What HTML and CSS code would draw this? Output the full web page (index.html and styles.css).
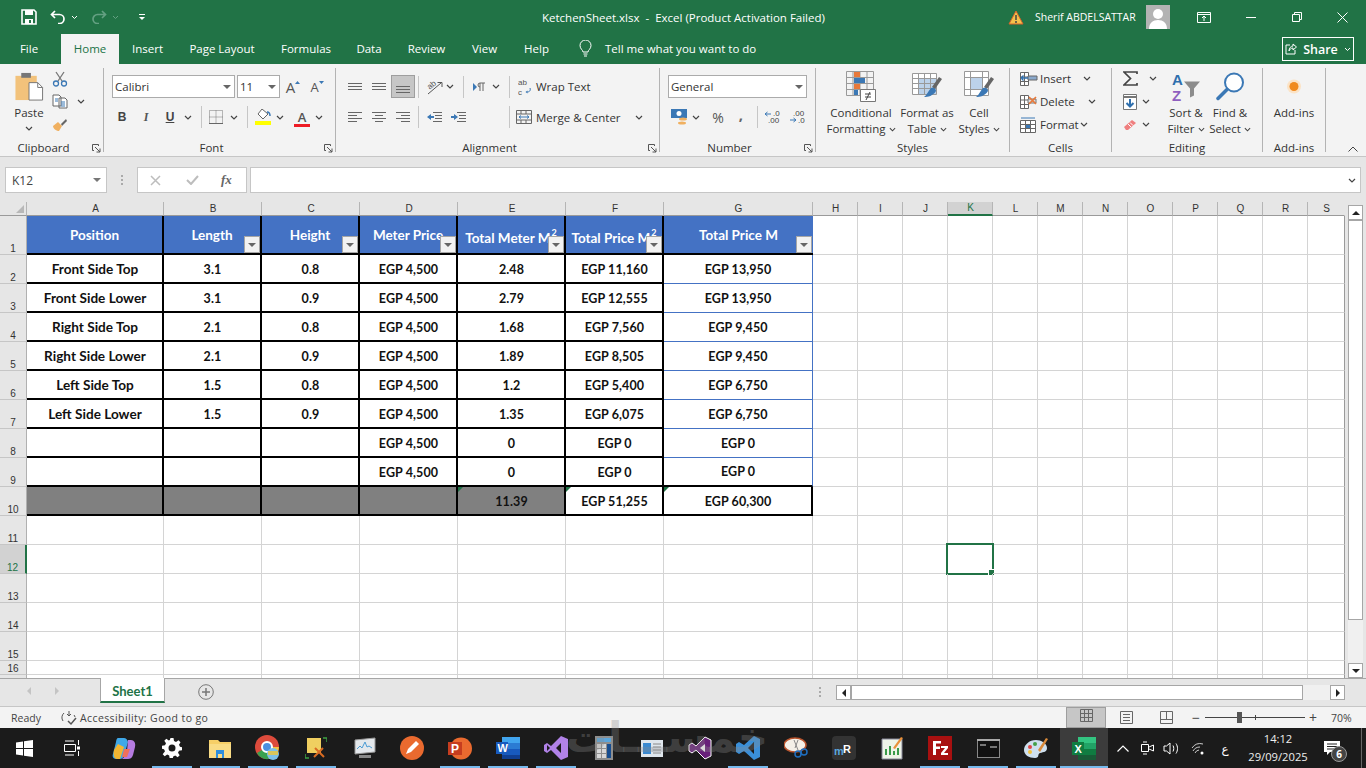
FILE: index.html
```html
<!DOCTYPE html>
<html lang="en">
<head>
<meta charset="utf-8">
<title>KetchenSheet.xlsx - Excel</title>
<link rel="stylesheet" href="styles.css">
</head>
<body>
<svg class="defs" width="0" height="0" aria-hidden="true">
  <defs>
    <symbol id="chev" viewBox="0 0 8 5"><path d="M1 1l3 3 3-3" fill="none" stroke="#444" stroke-width="1.2"/></symbol>
    <symbol id="launch" viewBox="0 0 9 9"><path d="M.5.5h6v1.5M.5.5v6H2M3 3l5 5M8 4.5V8H4.5" fill="none" stroke="#555"/></symbol>
    <symbol id="lines-l" viewBox="0 0 16 12"><path d="M1 1.5h14M1 4.5h9M1 7.5h14M1 10.5h9" stroke="#666"/></symbol>
    <symbol id="lines-c" viewBox="0 0 16 12"><path d="M1 1.5h14M4 4.5h8M1 7.5h14M4 10.5h8" stroke="#666"/></symbol>
    <symbol id="lines-r" viewBox="0 0 16 12"><path d="M1 1.5h14M6 4.5h9M1 7.5h14M6 10.5h9" stroke="#666"/></symbol>
    <symbol id="filter" viewBox="0 0 16 17"><rect x=".5" y=".5" width="15" height="16" fill="#f2f2f2" stroke="#a6a6a6"/><path d="M4 7h8l-4 4z" fill="#666"/></symbol>
  </defs>
</svg>

<header class="titlebar">
  <div class="qat">
    <svg class="save" width="16" height="16" viewBox="0 0 16 16"><path d="M1 1h12l2 2v12H1z" fill="none" stroke="#fff" stroke-width="1.6"/><path d="M4 1h8v5H4zM4 10h8v5H4z" fill="#fff"/><path d="M8 11h2v3H8z" fill="#217346"/></svg>
    <svg class="undo" width="16" height="14" viewBox="0 0 16 14"><path d="M5 1L1.500 4.500 5 8M2 4.500h7.500a4.500 4.500 0 0 1 0 9H8" fill="none" stroke="#fff" stroke-width="1.7"/></svg>
    <svg class="qchev" width="7" height="5"><path d="M1 1l2.500 2.500L6 1" fill="none" stroke="#fff"/></svg>
    <svg class="redo" width="16" height="14" viewBox="0 0 16 14"><path d="M11 1l3.500 3.500L11 8M14 4.500H6.500a4.500 4.500 0 0 0 0 9H8" fill="none" stroke="#64a082" stroke-width="1.7"/></svg>
    <svg class="qchev" width="7" height="5"><path d="M1 1l2.500 2.500L6 1" fill="none" stroke="#64a082"/></svg>
    <svg class="custom" width="8" height="8" viewBox="0 0 8 8"><path d="M1 1.500h6" stroke="#fff"/><path d="M1 4h6L4 7z" fill="#fff"/></svg>
  </div>
  <div class="doc-title">KetchenSheet.xlsx&nbsp; -&nbsp; Excel (Product Activation Failed)</div>
  <div class="account">
    <svg width="16" height="15" viewBox="0 0 16 15"><path d="M8 1l7 13H1z" fill="#f3c14b" stroke="#d9622b"/><path d="M8 5v5M8 11v2" stroke="#444" stroke-width="1.500"/></svg>
    <span class="user">Sherif ABDELSATTAR</span>
    <svg class="avatar" width="24" height="24" viewBox="0 0 24 24"><rect width="24" height="24" fill="#b3b3b3"/><circle cx="12" cy="9" r="5" fill="#fff"/><path d="M3 24c0-6 4-9 9-9s9 3 9 9z" fill="#fff"/></svg>
  </div>
  <div class="winbtns">
    <svg width="14" height="11" viewBox="0 0 14 11"><path d="M.5.500h13v10H.500zM.500 2.500h13M7 9V4M5 6l2-2 2 2" fill="none" stroke="#fff"/></svg>
    <svg class="minb" width="10" height="1" viewBox="0 0 10 1"><path d="M0 .5h10" stroke="#fff"/></svg>
    <svg class="maxb" width="10" height="10" viewBox="0 0 10 10"><path d="M.5 2.500h7v7h-7zM2.500 2.500v-2h7v7h-2" fill="none" stroke="#fff"/></svg>
    <svg class="closeb" width="11" height="11" viewBox="0 0 11 11"><path d="M.5.500l10 10M10.500.500l-10 10" stroke="#fff"/></svg>
  </div>
</header>

<nav class="tabs">
  <div class="tab">File</div>
  <div class="tab active">Home</div>
  <div class="tab">Insert</div>
  <div class="tab">Page Layout</div>
  <div class="tab">Formulas</div>
  <div class="tab">Data</div>
  <div class="tab">Review</div>
  <div class="tab">View</div>
  <div class="tab">Help</div>
  <div class="tell">
    <svg width="13" height="17" viewBox="0 0 13 17"><path d="M4 12c0-2-3-3-3-6.500a5.500 5.500 0 0 1 11 0C12 9 9 10 9 12zM4.500 14h4M5 16h3" fill="none" stroke="#fff"/></svg>
    <span>Tell me what you want to do</span>
  </div>
  <div class="share">
    <svg width="12" height="12" viewBox="0 0 12 12"><path d="M5 2H1v9h9V7M4 8c0-3 2-5 4-5V1l3.500 3L8 7V5C6 5 5 6 4 8z" fill="none" stroke="#fff"/></svg>
    <span>Share</span>
    <svg width="7" height="5"><path d="M1 1l2.500 2.500L6 1" fill="none" stroke="#fff"/></svg>
  </div>
</nav>

<section class="ribbon">
  <div class="group g-clip">
    <div class="gbody clip-body">
      <div class="big w34">
        <svg class="bigicon" width="30" height="32" viewBox="0 0 30 32"><path d="M1 5h22v25H1z" fill="#f2c27b"/><path d="M7 2h10v5H7z" fill="#777"/><path d="M15 12h9l5 5v13H15z" fill="#fff" stroke="#777"/><path d="M24 12v5h5" fill="none" stroke="#777"/></svg>
        <span class="bigtxt">Paste</span>
        <svg class="c8 mt" width="8" height="5"><use href="#chev"/></svg>
      </div>
      <div class="clip-col">
        <div class="row23"><svg width="16" height="16" viewBox="0 0 16 16"><path d="M4 1l6 9M12 1L6 10" stroke="#777" stroke-width="1.300"/><circle cx="4" cy="12.500" r="2.500" fill="none" stroke="#3b78b5" stroke-width="1.300"/><circle cx="12" cy="12.500" r="2.500" fill="none" stroke="#3b78b5" stroke-width="1.300"/></svg></div>
        <div class="row23"><svg width="16" height="15" viewBox="0 0 16 15"><path d="M1 1h6l2 2v9H1zM7 4h6l2 2v8H7z" fill="#fff" stroke="#666"/><path d="M3 5h3M3 7h3M9 8h4M9 10h4M9 12h4" stroke="#3b78b5"/></svg><svg class="c8 chevcopy" width="8" height="5"><use href="#chev"/></svg></div>
        <div class="row23"><svg width="16" height="15" viewBox="0 0 16 15"><path d="M9 7l5-5 1 2-5 5z" fill="#666"/><path d="M6 5l4 4-3 5c-2 0-6-2-6-5z" fill="#f0b060"/></svg></div>
      </div>
    </div>
    <div class="glabel"><span>Clipboard</span><svg class="launch" width="9" height="9"><use href="#launch"/></svg></div>
  </div>

  <div class="group g-font">
    <div class="gbody col">
      <div class="frow">
        <div class="combo font-name"><span>Calibri</span><i class="tri"></i></div>
        <div class="combo font-size"><span>11</span><i class="tri"></i></div>
        <div class="b w24 ml1 glyphA">A<svg class="caret" width="5" height="3"><path d="M0 3l2.500-3L5 3z" fill="#3b78b5"/></svg></div>
        <div class="b w24 glyphA small">A<svg class="caret" width="5" height="3"><path d="M0 0l2.500 3L5 0z" fill="#3b78b5"/></svg></div>
      </div>
      <div class="frow r2">
        <div class="b w24 bold-b">B</div>
        <div class="b w24 ital">I</div>
        <div class="b w24 und">U</div>
        <div class="b w12"><svg width="8" height="5"><use href="#chev"/></svg></div>
        <i class="sep ml7 mr3"></i>
        <div class="b w22"><svg width="14" height="14" viewBox="0 0 14 14"><path d="M.5.500h13v13H.500zM7 .5v13M.5 7h13" fill="none" stroke="#777" stroke-dasharray="1 1"/><path d="M0 13.500h14" stroke="#666"/></svg></div>
        <div class="b w14"><svg width="8" height="5"><use href="#chev"/></svg></div>
        <i class="sep ml6 mr3"></i>
        <div class="b w24"><svg width="17" height="16" viewBox="0 0 17 16"><path d="M7 0l6 5-5 5-5-5z" fill="#fff" stroke="#666"/><path d="M12 3c2 0 3 2 3 4" fill="none" stroke="#3b78b5" stroke-width="1.500"/><path d="M0 12h16v4H0z" fill="#ff0"/></svg></div>
        <div class="b w10"><svg width="8" height="5"><use href="#chev"/></svg></div>
        <div class="b w24 ml5 colorA">A</div>
        <div class="b w10"><svg width="8" height="5"><use href="#chev"/></svg></div>
      </div>
    </div>
    <div class="glabel"><span>Font</span><svg class="launch" width="9" height="9"><use href="#launch"/></svg></div>
  </div>

  <div class="group g-align">
    <div class="gbody col">
      <div class="frow">
        <div class="b w24"><svg width="14" height="7" viewBox="0 0 14 7"><path d="M0 .5h14M0 3.500h14M0 6.500h14" stroke="#666"/></svg></div>
        <div class="b w24"><svg width="14" height="7" viewBox="0 0 14 7"><path d="M0 .5h14M0 3.500h14M0 6.500h14" stroke="#666"/></svg></div>
        <div class="b w24 on"><svg width="14" height="7" viewBox="0 0 14 7"><path d="M0 .5h14M0 3.500h14M0 6.500h14" stroke="#666"/></svg></div>
        <i class="sep ml3"></i>
        <div class="b w22 ml4"><svg width="20" height="19" viewBox="0 0 20 19"><text x="3" y="11" transform="rotate(-40 7 8)" class="ic-txt">ab</text><path d="M4 17L17 6M13.500 5.500H18V10" fill="none" stroke="#555"/></svg></div>
        <div class="b w10"><svg width="8" height="5"><use href="#chev"/></svg></div>
        <i class="sep ml8"></i>
        <div class="b w22 ml4"><svg width="13" height="10" viewBox="0 0 13 10"><path d="M0 1l4 4-4 4z" fill="#3b78b5"/><path d="M7 9V1h5M10 9V1M7 1a2 2 0 0 0 0 4" fill="none" stroke="#666"/></svg></div>
        <div class="b w12"><svg width="8" height="5"><use href="#chev"/></svg></div>
        <i class="sep ml7"></i>
        <div class="b w18 ml6"><svg width="14" height="19" viewBox="0 0 14 19"><text x="0" y="8" class="ic-txt">ab</text><text x="0" y="18" class="ic-txt">c</text><path d="M12 11c1 3-1 4-3 4" fill="none" stroke="#3b78b5"/><path d="M9.500 13.500v3L7.500 15z" fill="#3b78b5"/></svg></div>
        <span class="t ml2">Wrap Text</span>
      </div>
      <div class="frow r2 r2a">
        <div class="b w24"><svg width="16" height="12"><use href="#lines-l"/></svg></div>
        <div class="b w24"><svg width="16" height="12"><use href="#lines-c"/></svg></div>
        <div class="b w24"><svg width="16" height="12"><use href="#lines-r"/></svg></div>
        <i class="sep ml3"></i>
        <div class="b w22 ml4"><svg width="16" height="12" viewBox="0 0 16 12"><path d="M7 1.500h9M9 4.500h7M9 7.500h7M7 10.500h9" stroke="#666"/><path d="M1 6l4-3v2h3v2H5v2z" fill="#3b78b5"/></svg></div>
        <div class="b w22 ml2"><svg width="16" height="12" viewBox="0 0 16 12"><path d="M7 1.500h9M9 4.500h7M9 7.500h7M7 10.500h9" stroke="#666"/><path d="M8 6L4 3v2H1v2h3v2z" fill="#3b78b5"/></svg></div>
        <i class="sep ml40"></i>
        <div class="b w18 ml5"><svg width="16" height="14" viewBox="0 0 16 14"><path d="M.5.500h15v13H.500zM.500 4h15M.5 10h15M5 .500V4M10 .500V4M5 10v3.500M10 10v3.500" fill="none" stroke="#666"/><path d="M3 7h10M3 7l2-1.500M3 7l2 1.500M13 7l-2-1.500M13 7l-2 1.500" stroke="#3b78b5" fill="none"/></svg></div>
        <span class="t ml3 mergetxt">Merge &amp; Center</span>
        <div class="b w12"><svg width="8" height="5"><use href="#chev"/></svg></div>
      </div>
    </div>
    <div class="glabel"><span>Alignment</span><svg class="launch" width="9" height="9"><use href="#launch"/></svg></div>
  </div>

  <div class="group g-num">
    <div class="gbody col">
      <div class="frow"><div class="combo num-fmt"><span>General</span><i class="tri"></i></div></div>
      <div class="frow r2 r2a">
        <div class="b w22"><svg width="17" height="16" viewBox="0 0 17 16"><path d="M0 0h16v9H0z" fill="#3b78b5"/><circle cx="8" cy="4.500" r="2.500" fill="#fff"/><ellipse cx="12" cy="10" rx="4" ry="1.500" fill="#f0b060"/><ellipse cx="11" cy="14" rx="4" ry="1.500" fill="#f0b060"/></svg></div>
        <div class="b w12"><svg width="8" height="5"><use href="#chev"/></svg></div>
        <div class="b w24 ml4 pct">%</div>
        <div class="b w22 comma">,</div>
        <i class="sep ml5"></i>
        <div class="b w26 ml1"><svg width="16" height="14" viewBox="0 0 16 14"><path d="M1 4h6M1 4l2.500-2M1 4l2.500 2" stroke="#3b78b5" fill="none"/><text x="9" y="6" class="dec">.0</text><text x="4" y="13" class="dec">.00</text></svg></div>
        <div class="b w24"><svg width="16" height="14" viewBox="0 0 16 14"><text x="4" y="6" class="dec">.00</text><path d="M1 10h6M7 10l-2.500-2M7 10l-2.500 2" stroke="#3b78b5" fill="none"/><text x="9" y="13" class="dec">.0</text></svg></div>
      </div>
    </div>
    <div class="glabel"><span>Number</span><svg class="launch" width="9" height="9"><use href="#launch"/></svg></div>
  </div>

  <div class="group g-styles">
    <div class="gbody styles-body">
      <div class="big w70">
        <svg class="bigicon" width="30" height="31" viewBox="0 0 30 31"><path d="M.5.500h27v24H.500zM7 .5v24M14 .5v24M21 .5v24M.5 6.500h27M.5 12.500h27M.5 18.500h27" fill="none" stroke="#999"/><path d="M8 1h6v5H8z" fill="#e8793a"/><path d="M8 7h11v5H8z" fill="#3b78b5"/><path d="M8 13h6v5H8z" fill="#e8793a"/><path d="M8 19h4v5H8z" fill="#3b78b5"/><path d="M14.500 18.500h15v12h-15z" fill="#fff" stroke="#777"/><path d="M19 23h6M19 26h6M24 21l-4 8" stroke="#444" fill="none"/></svg>
        <span class="bigtxt">Conditional</span>
        <span class="bigtxt">Formatting <svg width="7" height="5"><use href="#chev"/></svg></span>
      </div>
      <div class="big w54 ml4">
        <svg class="bigicon" width="30" height="31" viewBox="0 0 30 31"><path d="M.5 2.500h24v21H.500z" fill="#fff" stroke="#999"/><path d="M6 8h18v15H6z" fill="#bcd2ea"/><path d="M.5 7.500h24M.5 12.500h24M.5 17.500h24M6.500 2.500v21M12.500 2.500v21M18.500 2.500v21" fill="none" stroke="#999"/><path d="M27 6l3 2-7 10-3-2z" fill="#666"/><path d="M19 17c3-1 5 1 5 3-3 5-8 6-12 6 3-2 4-6 7-9z" fill="#3b78b5"/></svg>
        <span class="bigtxt">Format as</span>
        <span class="bigtxt">Table <svg width="7" height="5"><use href="#chev"/></svg></span>
      </div>
      <div class="big w48 ml1">
        <svg class="bigicon" width="30" height="31" viewBox="0 0 30 31"><path d="M.5.500h24v24H.500z" fill="#fff" stroke="#999"/><path d="M6 6h13v13H6z" fill="#bcd2ea"/><path d="M.5 6.500h24M.5 18.500h24M6.500.5v24M18.500.5v24" fill="none" stroke="#999"/><path d="M27 6l3 2-7 10-3-2z" fill="#666"/><path d="M19 17c3-1 5 1 5 3-3 5-8 6-12 6 3-2 4-6 7-9z" fill="#3b78b5"/></svg>
        <span class="bigtxt">Cell</span>
        <span class="bigtxt">Styles <svg width="7" height="5"><use href="#chev"/></svg></span>
      </div>
    </div>
    <div class="glabel center"><span>Styles</span></div>
  </div>

  <div class="group g-cells">
    <div class="gbody cells-body">
      <div class="row23">
        <svg width="18" height="16" viewBox="0 0 18 16"><path d="M.5 1.500h8v13h-8zM.5 6h8M.5 10.500h8M4.500 1.500v13" fill="#fff" stroke="#666"/><path d="M8 5h9v4H8z" fill="#8aa9cc" stroke="#666"/><path d="M8 7H1M1 7l2.500-2.500M1 7l2.500 2.500" fill="none" stroke="#2f6fad" stroke-width="1.300"/></svg>
        <span class="t ml2 tw41">Insert</span><svg width="8" height="5" class="cchev"><use href="#chev"/></svg>
      </div>
      <div class="row23">
        <svg width="18" height="16" viewBox="0 0 18 16"><path d="M.5 1.500h8v13h-8zM.5 6h8M.5 10.500h8M4.500 1.500v13" fill="#fff" stroke="#666"/><path d="M8 5h8v4H8z" fill="#ddd" stroke="#777"/><path d="M9 3l7 7M16 3l-7 7" stroke="#e8793a" stroke-width="1.700"/></svg>
        <span class="t ml2 tw46">Delete</span><svg width="8" height="5" class="cchev"><use href="#chev"/></svg>
      </div>
      <div class="row23">
        <svg width="18" height="16" viewBox="0 0 18 16"><path d="M.5 3.500h15v12H.500zM.5 7.500h15M.5 11.500h15M5.500 3.500v12M10.500 3.500v12" fill="#fff" stroke="#666"/><path d="M6 8h4v3H6z" fill="#3b78b5"/><path d="M1 1h14" stroke="#3b78b5"/></svg>
        <span class="t ml2 tw38">Format</span><svg width="8" height="5" class="cchev"><use href="#chev"/></svg>
      </div>
    </div>
    <div class="glabel center"><span>Cells</span></div>
  </div>

  <div class="group g-edit">
    <div class="gbody edit-body">
      <div class="edit-col">
        <div class="row23"><div class="b w20 sigma"><svg width="15" height="15" viewBox="0 0 15 15"><path d="M14 3V1H1l6.500 6.500L1 14h13v-2" fill="none" stroke="#444" stroke-width="1.700"/></svg></div><div class="b w12 ml7"><svg width="8" height="5"><use href="#chev"/></svg></div></div>
        <div class="row23"><div class="b w20"><svg width="14" height="16" viewBox="0 0 14 16"><path d="M.5.500h13v15H.500z" fill="#fff" stroke="#777"/><path d="M.5 3h13" stroke="#777" stroke-width="2"/><path d="M7 5v7M3.500 9L7 12.500 10.500 9" fill="none" stroke="#2f6fad" stroke-width="2"/></svg></div><div class="b w12"><svg width="8" height="5"><use href="#chev"/></svg></div></div>
        <div class="row23"><div class="b w20"><svg width="14" height="12" viewBox="0 0 14 12"><path d="M1 8l8-7 4 3-8 7H3z" fill="#ef7e7e"/><path d="M5 5l3 3M7 3.500l3 3" stroke="#fff"/></svg></div><div class="b w12"><svg width="8" height="5"><use href="#chev"/></svg></div></div>
      </div>
      <div class="big w44">
        <svg class="bigicon" width="30" height="30" viewBox="0 0 30 30"><text x="1" y="13" class="az a">A</text><text x="1" y="29" class="az z">Z</text><path d="M13 10h16l-6 7v7l-4 2v-9z" fill="#8c8c8c"/></svg>
        <span class="bigtxt">Sort &amp;</span>
        <span class="bigtxt">Filter <svg width="7" height="5"><use href="#chev"/></svg></span>
      </div>
      <div class="big w44">
        <svg class="bigicon" width="29" height="30" viewBox="0 0 29 30"><circle cx="18" cy="11" r="9" fill="#fff" stroke="#3b78b5" stroke-width="2"/><path d="M11 18L2 27" stroke="#3b78b5" stroke-width="3.500" stroke-linecap="round"/></svg>
        <span class="bigtxt">Find &amp;</span>
        <span class="bigtxt">Select <svg width="7" height="5"><use href="#chev"/></svg></span>
      </div>
    </div>
    <div class="glabel center"><span>Editing</span></div>
  </div>

  <div class="group g-add">
    <div class="gbody">
      <div class="big w62">
        <svg class="bigicon" width="30" height="30" viewBox="0 0 30 30"><circle cx="15" cy="15" r="7" fill="#fbe3c6"/><circle cx="15" cy="15" r="4.500" fill="#f08a1e"/></svg>
        <span class="bigtxt">Add-ins</span>
      </div>
    </div>
    <div class="glabel center"><span>Add-ins</span></div>
  </div>

  <svg class="collapse" width="10" height="6" viewBox="0 0 10 6"><path d="M.5 5.500L5 1l4.500 4.500" fill="none" stroke="#444"/></svg>
</section>

<section class="formula">
  <div class="namebox"><span>K12</span><i class="tri"></i></div>
  <div class="fdots"></div>
  <div class="fbtns">
    <svg width="11" height="11" viewBox="0 0 11 11"><path d="M1 1l9 9M10 1l-9 9" stroke="#bdbdbd" stroke-width="1.500"/></svg>
    <svg width="13" height="10" viewBox="0 0 13 10"><path d="M1 5l4 4 7-8" fill="none" stroke="#bdbdbd" stroke-width="2"/></svg>
    <span class="fx">fx</span>
  </div>
  <div class="finput"><svg width="8" height="5"><use href="#chev"/></svg></div>
</section>

<main class="sheet">
  <table class="grid">
    <colgroup>
      <col class="c-h"><col class="c-a"><col class="c-b"><col class="c-b"><col class="c-b"><col class="c-e"><col class="c-b"><col class="c-g">
      <col class="c-n"><col class="c-n"><col class="c-n"><col class="c-n"><col class="c-n"><col class="c-n"><col class="c-n"><col class="c-n"><col class="c-n"><col class="c-n"><col class="c-n"><col class="c-s">
    </colgroup>
    <tr class="rh">
      <th class="corner"></th><th>A</th><th>B</th><th>C</th><th>D</th><th>E</th><th>F</th><th>G</th><th>H</th><th>I</th><th>J</th><th class="sel">K</th><th>L</th><th>M</th><th>N</th><th>O</th><th>P</th><th>Q</th><th>R</th><th>S</th>
    </tr>
    <tr class="r1">
      <th>1</th>
      <td class="hd"><span>Position</span></td>
      <td class="hd"><span>Length</span><svg class="fb" width="16" height="17"><use href="#filter"/></svg></td>
      <td class="hd"><span>Height</span><svg class="fb" width="16" height="17"><use href="#filter"/></svg></td>
      <td class="hd"><span>Meter Price</span><svg class="fb" width="16" height="17"><use href="#filter"/></svg></td>
      <td class="hd low"><span>Total Meter M<sup>2</sup></span><svg class="fb" width="16" height="17"><use href="#filter"/></svg></td>
      <td class="hd low"><span>Total Price M<sup>2</sup></span><svg class="fb" width="16" height="17"><use href="#filter"/></svg></td>
      <td class="hd"><span>Total Price M</span><svg class="fb" width="16" height="17"><use href="#filter"/></svg></td>
      <td></td><td></td><td></td><td></td><td></td><td></td><td></td><td></td><td></td><td></td><td></td><td></td>
    </tr>
    <tr><th>2</th><td class="d">Front Side Top</td><td class="d">3.1</td><td class="d">0.8</td><td class="d">EGP 4,500</td><td class="d">2.48</td><td class="d">EGP 11,160</td><td class="d blue">EGP 13,950</td><td></td><td></td><td></td><td></td><td></td><td></td><td></td><td></td><td></td><td></td><td></td><td></td></tr>
    <tr><th>3</th><td class="d">Front Side Lower</td><td class="d">3.1</td><td class="d">0.9</td><td class="d">EGP 4,500</td><td class="d">2.79</td><td class="d">EGP 12,555</td><td class="d blue">EGP 13,950</td><td></td><td></td><td></td><td></td><td></td><td></td><td></td><td></td><td></td><td></td><td></td><td></td></tr>
    <tr><th>4</th><td class="d">Right Side Top</td><td class="d">2.1</td><td class="d">0.8</td><td class="d">EGP 4,500</td><td class="d">1.68</td><td class="d">EGP 7,560</td><td class="d blue">EGP 9,450</td><td></td><td></td><td></td><td></td><td></td><td></td><td></td><td></td><td></td><td></td><td></td><td></td></tr>
    <tr><th>5</th><td class="d">Right Side Lower</td><td class="d">2.1</td><td class="d">0.9</td><td class="d">EGP 4,500</td><td class="d">1.89</td><td class="d">EGP 8,505</td><td class="d blue">EGP 9,450</td><td></td><td></td><td></td><td></td><td></td><td></td><td></td><td></td><td></td><td></td><td></td><td></td></tr>
    <tr><th>6</th><td class="d">Left Side Top</td><td class="d">1.5</td><td class="d">0.8</td><td class="d">EGP 4,500</td><td class="d">1.2</td><td class="d">EGP 5,400</td><td class="d blue">EGP 6,750</td><td></td><td></td><td></td><td></td><td></td><td></td><td></td><td></td><td></td><td></td><td></td><td></td></tr>
    <tr><th>7</th><td class="d">Left Side Lower</td><td class="d">1.5</td><td class="d">0.9</td><td class="d">EGP 4,500</td><td class="d">1.35</td><td class="d">EGP 6,075</td><td class="d blue">EGP 6,750</td><td></td><td></td><td></td><td></td><td></td><td></td><td></td><td></td><td></td><td></td><td></td><td></td></tr>
    <tr><th>8</th><td class="d"></td><td class="d"></td><td class="d"></td><td class="d">EGP 4,500</td><td class="d">0</td><td class="d">EGP 0</td><td class="d blue">EGP 0</td><td></td><td></td><td></td><td></td><td></td><td></td><td></td><td></td><td></td><td></td><td></td><td></td></tr>
    <tr><th>9</th><td class="d"></td><td class="d"></td><td class="d"></td><td class="d">EGP 4,500</td><td class="d">0</td><td class="d">EGP 0</td><td class="d blue last9">EGP 0</td><td></td><td></td><td></td><td></td><td></td><td></td><td></td><td></td><td></td><td></td><td></td><td></td></tr>
    <tr><th>10</th><td class="d grey"></td><td class="d grey"></td><td class="d grey"></td><td class="d grey"></td><td class="d grey note">11.39</td><td class="d note">EGP 51,255</td><td class="d note">EGP 60,300</td><td></td><td></td><td></td><td></td><td></td><td></td><td></td><td></td><td></td><td></td><td></td><td></td></tr>
    <tr><th>11</th><td></td><td></td><td></td><td></td><td></td><td></td><td></td><td></td><td></td><td></td><td></td><td></td><td></td><td></td><td></td><td></td><td></td><td></td><td></td></tr>
    <tr><th class="sel-row">12</th><td></td><td></td><td></td><td></td><td></td><td></td><td></td><td></td><td></td><td></td><td class="cur"><i class="cursor"></i></td><td></td><td></td><td></td><td></td><td></td><td></td><td></td><td></td></tr>
    <tr><th>13</th><td></td><td></td><td></td><td></td><td></td><td></td><td></td><td></td><td></td><td></td><td></td><td></td><td></td><td></td><td></td><td></td><td></td><td></td><td></td></tr>
    <tr><th>14</th><td></td><td></td><td></td><td></td><td></td><td></td><td></td><td></td><td></td><td></td><td></td><td></td><td></td><td></td><td></td><td></td><td></td><td></td><td></td></tr>
    <tr><th>15</th><td></td><td></td><td></td><td></td><td></td><td></td><td></td><td></td><td></td><td></td><td></td><td></td><td></td><td></td><td></td><td></td><td></td><td></td><td></td></tr>
    <tr class="r16"><th>16</th><td></td><td></td><td></td><td></td><td></td><td></td><td></td><td></td><td></td><td></td><td></td><td></td><td></td><td></td><td></td><td></td><td></td><td></td><td></td></tr>
    <tr class="r17"><th></th><td></td><td></td><td></td><td></td><td></td><td></td><td></td><td></td><td></td><td></td><td></td><td></td><td></td><td></td><td></td><td></td><td></td><td></td><td></td></tr>
  </table>
  <div class="vscroll">
    <div class="sbtn"><i class="up"></i></div>
    <div class="vthumb"></div>
    <div class="sbtn"><i class="down"></i></div>
  </div>
</main>

<section class="sheetbar">
  <div class="navs"><i class="nl"></i><i class="nr"></i></div>
  <div class="sheettab">Sheet1</div>
  <svg class="plus" width="16" height="16" viewBox="0 0 16 16"><circle cx="8" cy="8" r="7.300" fill="none" stroke="#777"/><path d="M4 8h8M8 4v8" stroke="#777" stroke-width="1.500"/></svg>
  <div class="hdots"></div>
  <div class="hscroll">
    <div class="sbtn"><i class="left"></i></div>
    <div class="hthumb"></div>
    <div class="sbtn"><i class="right"></i></div>
  </div>
</section>

<footer class="status">
  <span class="ready">Ready</span>
  <svg class="acc" width="16" height="16" viewBox="0 0 16 16"><path d="M3 3a6 6 0 0 0-1 8M8 1v5M6 4l2 2 2-2M13 5a6 6 0 0 1 1 2" fill="none" stroke="#555"/><path d="M7 11l3 3 5-6" fill="none" stroke="#555" stroke-width="1.500"/></svg>
  <span class="acctxt">Accessibility: Good to go</span>
  <div class="views">
    <div class="view on"><svg width="13" height="13" viewBox="0 0 13 13"><path d="M.5.500h12v12H.500zM4.500.5v12M8.500.5v12M.5 4.500h12M.5 8.500h12" fill="none" stroke="#666"/></svg></div>
    <div class="view"><svg width="13" height="13" viewBox="0 0 13 13"><path d="M.5.500h12v12H.500zM3 3.500h7M3 6.500h7M3 9.500h7" fill="none" stroke="#666"/></svg></div>
    <div class="view"><svg width="13" height="13" viewBox="0 0 13 13"><path d="M.5.500h12v12H.500zM.5 8.500h12M6.500.5v8" fill="none" stroke="#666"/></svg></div>
  </div>
  <span class="zm zm-minus">&minus;</span>
  <div class="slider"><i class="thumb"></i><i class="tick"></i></div>
  <span class="zm zm-plus">+</span>
  <span class="pctz">70%</span>
</footer>

<div class="taskbar">
  <div class="slot"><svg width="17" height="17" viewBox="0 0 17 17"><path d="M0 2.400L7 1.400v6.600H0zM8 1.300L17 0v8H8zM0 9h7v6.600l-7-1zM8 9h9v8l-9-1.300z" fill="#fff"/></svg></div>
  <div class="slot"><svg width="17" height="16" viewBox="0 0 17 16"><path d="M1 1h9M1 15h9M.5 4.500h11v7H.5zM14.500 0v5M14.500 11v5" fill="none" stroke="#fff"/><path d="M13 6.500h3v3h-3z" fill="#fff"/></svg></div>
  <div class="apps">
    <div class="slot"><svg width="24" height="24" viewBox="0 0 24 24"><path d="M6 2h6c2 0 3 1 4 4l-4 14c-1 2-2 3-4 3H4c-3 0-4-3-3-5l3-12c.5-3 1-4 2-4z" fill="#3fa8e8"/><path d="M2 14l4-6 6 3-4 12H5c-3 0-4-4-3-9z" fill="#f2b632"/><path d="M16 4h3c3 0 5 3 4 7l-2 8c-1 3-3 4-5 4h-6c3-2 4-5 5-8z" fill="#b57be0"/><path d="M12 13h6l-3 8h-5z" fill="#f0705a"/></svg></div>
    <div class="slot u"><svg width="20" height="20" viewBox="0 0 20 20"><path d="M8.500 0h3l.5 3 2 1 2.500-1.700 2 2L17 6.800l1 2 2 .5v3l-3 .5-1 2 1.700 2.500-2 2-2.500-1.700-2 1-.5 2h-3l-.5-3-2-1-2.500 1.700-2-2L3 13.200l-1-2-2-.5v-3l3-.5 1-2L2.300 2.800l2-2L6.800 2.500l1-.5zM10 6.500a3.500 3.500 0 1 0 0 7 3.500 3.500 0 0 0 0-7z" fill="#fff" fill-rule="evenodd"/></svg></div>
    <div class="slot u"><svg width="22" height="19" viewBox="0 0 22 19"><path d="M0 1h9l2 2h11v16H0z" fill="#f6cf67"/><path d="M0 5h22v14H0z" fill="#f9dc85"/><path d="M7 11h8v8h-2v-4H9v4H7z" fill="#2f8fdc"/></svg></div>
    <div class="slot u"><svg width="26" height="26" viewBox="0 0 26 26"><circle cx="12" cy="12" r="12" fill="#dd4b3c"/><path d="M12 12L2 18A12 12 0 0 0 14 24z" fill="#38a14f"/><path d="M12 12h12a12 12 0 0 1-10 12z" fill="#f6c33f"/><circle cx="12" cy="12" r="5" fill="#4b8fe0" stroke="#fff" stroke-width="2"/><circle cx="18" cy="19" r="6" fill="#7cc0e8"/><path d="M13 16h10v4H13z" fill="#d8c65a"/></svg></div>
    <div class="slot u"><svg width="22" height="22" viewBox="0 0 22 22"><path d="M2 1h14v15H2z" fill="#f0cf60"/><path d="M0 21v-4M0 21h4M18 1h4v4" fill="none" stroke="#3ca043" stroke-width="1.500"/><path d="M9 20l9-9M10 11l9 9" stroke="#d96b22" stroke-width="2"/></svg></div>
    <div class="slot"><svg width="23" height="22" viewBox="0 0 23 22"><path d="M2 3l20-2v14L2 17z" fill="#e4e8ec" stroke="#999"/><path d="M4 12l3-3 2 2 3-6 2 5 2-1 3 2" fill="none" stroke="#4a9bd4"/><path d="M6 18h12v3H6z" fill="#888"/></svg></div>
    <div class="slot"><svg width="24" height="24" viewBox="0 0 24 24"><circle cx="12" cy="12" r="12" fill="#ea6a2f"/><path d="M6 18l2-5 8-8 3 3-8 8z" fill="#fff"/></svg></div>
    <div class="slot u"><svg width="24" height="23" viewBox="0 0 24 23"><circle cx="13" cy="11.500" r="11" fill="#ea6a2f"/><path d="M0 5h14v13H0z" fill="#c63d1f"/><text x="3" y="16" class="appl">P</text></svg></div>
    <div class="slot u"><svg width="24" height="22" viewBox="0 0 24 22"><path d="M6 0h18v6H6z" fill="#41a5ee"/><path d="M6 6h18v6H6z" fill="#2b7cd3"/><path d="M6 12h18v6H6z" fill="#185abd"/><path d="M6 18h18v4H6z" fill="#103f91"/><path d="M0 5h12v12H0z" fill="#185abd"/><text x="1.500" y="15" class="appl small">W</text></svg></div>
    <div class="slot u"><svg width="24" height="24" viewBox="0 0 24 24"><path d="M17 0l7 3v18l-7 3-10-10-4 3-3-2v-6l3-2 4 3zM17 7l-5 5 5 5z" fill="#b182e8" fill-rule="evenodd"/><path d="M3 9v6l3-3z" fill="#1b1b1b"/></svg></div>
    <div class="slot"><svg width="18" height="24" viewBox="0 0 18 24"><path d="M0 0h18v24H0z" fill="#8e8e8e"/><path d="M2 2h14v4H2z" fill="#5aa6dc"/><path d="M2 8h4v4H2zM7 8h4v4H7zM2 13h4v4H2zM7 13h4v4H7zM2 18h4v4H2zM7 18h4v4H7z" fill="#d8d8d8"/><path d="M12 8h4v14h-4z" fill="#174d8f"/></svg></div>
    <div class="slot"><svg width="22" height="17" viewBox="0 0 22 17"><path d="M0 0h22v17H0z" fill="#dfe6ec"/><path d="M2 3h8v11H2z" fill="#3a89d0"/><path d="M12 4h8M12 7h8M12 10h8M12 13h8" stroke="#888"/></svg></div>
    <div class="slot"><svg width="24" height="24" viewBox="0 0 24 24"><path d="M17 1l6 3v16l-6 3-9-9-4 3-3-2V9l3-2 4 3z" fill="#68217a" stroke="#fff"/><path d="M17 8l-5 4 5 4z" fill="#fff"/></svg></div>
    <div class="slot u"><svg width="24" height="24" viewBox="0 0 24 24"><path d="M18 0l6 3v18l-6 3-10-9-5 3-3-2V8l3-2 5 3z" fill="#3a8fd8"/><path d="M18 6l-6 6 6 6z" fill="#1b1b1b"/></svg></div>
    <div class="slot"><svg width="24" height="22" viewBox="0 0 24 22"><ellipse cx="11" cy="8" rx="11" ry="7" fill="#f4f0e8" stroke="#b9532c" stroke-width="1.500"/><path d="M10 3l4 10M14 3l-3 8" stroke="#888"/><circle cx="14" cy="17" r="3" fill="none" stroke="#1f6fc0" stroke-width="1.500"/><circle cx="20" cy="15" r="3" fill="none" stroke="#1f6fc0" stroke-width="1.500"/></svg></div>
    <div class="slot"><svg width="24" height="24" viewBox="0 0 24 24"><rect width="24" height="24" rx="4" fill="#333"/><text x="2" y="19" class="mr m">m</text><text x="11" y="17" class="mr">R</text></svg></div>
    <div class="slot"><svg width="22" height="24" viewBox="0 0 22 24"><path d="M1 3h20v20H1z" fill="#eef3e8" stroke="#889"/><path d="M4 19v-6h2v6zM8 19v-9h2v9zM12 19v-4h2v4zM16 19v-7h2v7z" fill="#3a9a4a"/><path d="M12 12l8-11 2 1-8 11z" fill="#e9913a"/></svg></div>
    <div class="slot u"><svg width="24" height="24" viewBox="0 0 24 24"><rect width="24" height="24" fill="#a81010"/><path d="M5 5h8v2.500H8v3h4V13H8v6H5zM13 10h7v2l-4 5h4v2h-7v-2l4-5h-4z" fill="#fff"/></svg></div>
    <div class="slot u"><svg width="23" height="19" viewBox="0 0 23 19"><rect x=".5" y=".5" width="22" height="18" fill="#111" stroke="#888"/><path d="M0 0h23v2H0z" fill="#aaa"/><path d="M3 6h6M13 8h7" stroke="#ddd"/></svg></div>
    <div class="slot u"><svg width="24" height="22" viewBox="0 0 24 22"><path d="M12 3C5 3 0 8 0 13c0 5 5 8 11 8 5 0 2-4 5-5 4-1 7-1 7-5 0-5-6-8-11-8z" fill="#cfe0ee"/><circle cx="6" cy="10" r="2" fill="#e04646"/><circle cx="11" cy="7" r="2" fill="#43a047"/><circle cx="6" cy="15" r="2" fill="#f3c33f"/><path d="M14 13L22 1l2 1-8 13z" fill="#d98a3a"/></svg></div>
    <div class="slot active"><svg width="24" height="23" viewBox="0 0 24 23"><path d="M6 0h18v6H6z" fill="#33c481"/><path d="M6 6h18v6H6z" fill="#21a366"/><path d="M6 12h18v6H6z" fill="#107c41"/><path d="M6 18h18v5H6z" fill="#185c37"/><path d="M0 5h12v13H0z" fill="#107c41"/><text x="2.500" y="15.500" class="appl small">X</text></svg></div>
  </div>
  <div class="tray">
    <div class="ti"><svg width="12" height="7" viewBox="0 0 12 7"><path d="M.5 6.500L6 1l5.500 5.500" fill="none" stroke="#fff" stroke-width="1.200"/></svg></div>
    <div class="ti"><svg width="13" height="14" viewBox="0 0 13 14"><path d="M.5 3.500h7v7h-7zM8 6l4.500-2v6L8 8M2 1h4M2 13h4" fill="none" stroke="#fff"/></svg></div>
    <div class="ti"><svg width="16" height="13" viewBox="0 0 16 13"><path d="M1 4h2.500L7 1v11L3.500 9H1zM10 3.500c1 2 1 4 0 6M13 1.500c2 3 2 7 0 10" fill="none" stroke="#fff"/></svg></div>
    <div class="ti ml2"><svg width="13" height="13" viewBox="0 0 13 13"><path d="M1 6a10 10 0 0 1 11-4M2 9a8 8 0 0 1 7-4M4 11a5 5 0 0 1 4-3" fill="none" stroke="#ccc"/><circle cx="11" cy="11" r="1.500" fill="#fff"/></svg></div>
    <div class="ti ml4 lang">&#1593;</div>
    <div class="clock"><span>14:12</span><span>29/09/2025</span></div>
    <div class="notif"><svg width="16" height="15" viewBox="0 0 16 15"><path d="M0 0h16v11H6l-3 3v-3H0z" fill="#fff"/><path d="M3 3h10M3 5.500h10M3 8h7" stroke="#222"/></svg><span class="nbadge">6</span></div>
  </div>
  <i class="desk"></i>
</div>

<div class="watermark" dir="rtl">خمســـات</div>
</body>
</html>
```
FILE: styles.css
```css
* { box-sizing: border-box; }
html, body { margin: 0; padding: 0; }
body {
  width: 1366px; height: 768px; overflow: hidden; position: relative;
  display: flex; flex-direction: column;
  background: #e6e6e6;
  font-family: "Open Sans", "Noto Sans", sans-serif;
  font-size: 11.5px; color: #333;
}
i { display: block; font-style: normal; }
svg { display: block; flex: none; }
.defs { position: absolute; }

/* title bar */
.titlebar { height: 34px; background: #217346; color: #fff; display: flex; align-items: center; flex: none; }
.qat { width: 542px; display: flex; align-items: center; padding-left: 21px; }
.undo { margin-left: 13px; }
.redo { margin-left: 13px; }
.qchev { margin-left: 5px; }
.custom { margin-left: 19px; }
.doc-title { width: 460px; font-size: 11.5px; white-space: nowrap; }
.account { display: flex; align-items: center; margin-left: 6px; width: 182px; }
.user { margin-left: 11px; width: 111px; white-space: nowrap; font-size: 10.5px; }
.winbtns { display: flex; align-items: center; margin-left: 7px; }
.minb { margin-left: 35px; }
.maxb { margin-left: 36px; }
.closeb { margin-left: 35px; }

/* tabs */
.tabs { height: 30px; background: #217346; color: #fff; display: flex; flex: none; font-size: 11.5px; }
.tab { display: flex; align-items: center; justify-content: center; padding-bottom: 1px; white-space: nowrap; height: 30px; }
.tab:nth-child(1) { width: 58px; }
.tab:nth-child(2) { width: 58px; margin-left: 3px; }
.tab:nth-child(3) { width: 57px; }
.tab:nth-child(4) { width: 92px; }
.tab:nth-child(5) { width: 76px; }
.tab:nth-child(6) { width: 50px; }
.tab:nth-child(7) { width: 65px; }
.tab:nth-child(8) { width: 51px; }
.tab:nth-child(9) { width: 53px; }
.tab.active { background: #f3f3f3; color: #217346; }
.tell { display: flex; align-items: center; margin-left: 16px; width: 186px; white-space: nowrap; padding-bottom: 1px; }
.tell span { margin-left: 13px; }
.share { margin-left: 517px; margin-top: 3px; width: 72px; height: 24px; border: 1px solid #fff; display: flex; align-items: center; justify-content: center; gap: 6px; font-size: 12.5px; font-weight: 600; }

/* ribbon */
.ribbon { height: 93px; background: #f3f3f3; border-bottom: 1px solid #c6c6c6; display: flex; padding-top: 4px; flex: none; position: relative; }
.group { height: 84px; border-right: 1px solid #b3b3b3; display: flex; flex-direction: column; flex: none; }
.g-clip { width: 104px; }
.g-font { width: 232px; padding-left: 6px; }
.g-align { width: 324px; padding-left: 7px; }
.g-num { width: 156px; padding-left: 8px; }
.g-styles { width: 194px; padding-left: 10px; }
.g-cells { width: 102px; padding-left: 10px; }
.g-edit { width: 151px; padding-left: 8px; }
.g-add { width: 63px; }
.gbody { flex: 1; min-height: 0; }
.col { display: flex; flex-direction: column; padding-top: 7px; }
.frow { display: flex; align-items: center; height: 23px; }
.r2 { margin-top: 8px; height: 22px; }
.r2a { margin-top: 8px; }
.glabel { height: 14px; margin-bottom: -3px; line-height: 14px; display: flex; align-items: center; flex: none; font-size: 11.5px; }
.glabel span { flex: 1; text-align: center; }
.glabel .launch { margin: 0 2px 0 5px; }
.g-font .glabel { margin-left: -6px; }
.g-align .glabel { margin-left: -7px; }
.g-num .glabel { margin-left: -8px; }
.g-styles .glabel { margin-left: -10px; }
.g-cells .glabel { margin-left: -10px; }
.g-edit .glabel { margin-left: -8px; }

.clip-body { display: flex; padding-left: 12px; }
.clip-col { margin-left: 6px; margin-top: -1px; }
.chevcopy { margin-left: 9px; }
.big { display: flex; flex-direction: column; align-items: center; flex: none; padding-top: 3px; }
.bigicon { height: 31px; margin-bottom: 3px; }
.bigtxt { display: flex; align-items: center; gap: 3px; line-height: 16px; height: 16px; white-space: nowrap; font-size: 11.5px; }
.mt { margin-top: 5px; }
.row23 { display: flex; align-items: center; height: 23px; }
.styles-body { display: flex; }
.cells-body { margin-top: -1px; }
.edit-body { display: flex; }
.edit-col { width: 44px; margin-top: -1px; }
.t { white-space: nowrap; font-size: 11.5px; }
.tw41 { width: 41px; }
.tw46 { width: 46px; }
.tw38 { width: 38px; }
.cchev { margin-left: 2px; }
.mergetxt { width: 97px; }

.b { display: flex; align-items: center; justify-content: center; height: 23px; flex: none; }
.w10 { width: 10px; } .w12 { width: 12px; } .w14 { width: 14px; } .w18 { width: 18px; }
.w20 { width: 20px; } .w22 { width: 22px; } .w24 { width: 24px; } .w26 { width: 26px; }
.w34 { width: 34px; } .w44 { width: 44px; } .w48 { width: 48px; } .w54 { width: 54px; }
.w62 { width: 62px; } .w70 { width: 70px; }
.ml1 { margin-left: 1px; } .ml2 { margin-left: 2px; } .ml3 { margin-left: 3px; } .ml4 { margin-left: 4px; }
.ml5 { margin-left: 5px; } .ml6 { margin-left: 6px; } .ml7 { margin-left: 7px; } .ml8 { margin-left: 8px; }
.ml40 { margin-left: 40px; } .mr3 { margin-right: 3px; }
.sep { width: 1px; height: 22px; background: #c6c6c6; flex: none; }
.on { background: #c6c6c6; border: 1px solid #9e9e9e; align-items: flex-end; padding-bottom: 4px; }
.ic-txt { font: 8px "Liberation Sans", sans-serif; fill: #555; }

.combo { height: 23px; background: #fff; border: 1px solid #ababab; display: flex; align-items: center; font-size: 11.5px; padding-left: 2px; position: relative; }
.combo span { flex: 1; }
.tri { width: 0; height: 0; border-left: 4px solid transparent; border-right: 4px solid transparent; border-top: 4px solid #666; margin-right: 3px; }
.font-name { width: 123px; margin-left: 2px; }
.font-size { width: 43px; margin-left: 2px; }
.num-fmt { width: 139px; }
.glyphA { font-size: 15px; color: #555; position: relative; }
.glyphA.small { font-size: 13px; }
.caret { margin-bottom: 9px; }
.bold-b { font-weight: 700; font-size: 12px; color: #444; font-family: "Liberation Sans", sans-serif; }
.ital { font-style: italic; font-size: 12px; font-weight: 700; color: #555; font-family: "Liberation Serif", serif; }
.und { text-decoration: underline; font-weight: 700; font-size: 12px; color: #444; font-family: "Liberation Sans", sans-serif; }
.colorA { font-weight: 600; font-size: 13px; color: #555; flex-direction: column; }
.colorA::after { content: ""; width: 16px; height: 3px; background: #ee1c25; display: block; margin-top: -2px; }
.pct { font-size: 14px; color: #555; }
.comma { font-size: 15px; font-weight: 700; color: #666; padding-bottom: 6px; }
.dec { font: 8px "Liberation Sans", sans-serif; fill: #444; }
.az { font: 700 15px "Liberation Sans", sans-serif; }
.a { fill: #2f6fad; }
.z { fill: #8f5fbf; }
.collapse { position: absolute; right: 8px; bottom: 4px; }

/* formula bar */
.formula { height: 45px; padding: 10px 5px 9px 5px; display: flex; flex: none; background: #e6e6e6; }
.namebox { width: 102px; height: 26px; background: #fff; border: 1px solid #c6c6c6; display: flex; align-items: center; padding-left: 6px; font-size: 12px; color: #444; }
.namebox span { flex: 1; }
.namebox .tri { border-top-color: #777; margin-right: 5px; }
.fdots { width: 2px; height: 10px; margin: 8px 14px 0 14px; background: repeating-linear-gradient(#aaa 0 2px, transparent 2px 4px); }
.fbtns { width: 110px; height: 26px; background: #fff; border: 1px solid #c6c6c6; display: flex; align-items: center; padding-left: 12px; gap: 25px; }
.fx { font: italic 700 13px "Liberation Serif", serif; color: #666; margin-left: -3px; }
.finput { flex: 1; margin-left: 3px; height: 26px; background: #fff; border: 1px solid #c6c6c6; display: flex; align-items: center; justify-content: flex-end; padding-right: 4px; }

/* sheet */
.sheet { height: 476px; display: flex; flex: none; }
.grid { border-collapse: separate; border-spacing: 0; table-layout: fixed; width: 1345px; height: 476px; background: #fff; flex: none; }
.c-h { width: 27px; } .c-a { width: 137px; } .c-b { width: 98px; } .c-e { width: 108px; } .c-g { width: 149px; } .c-n { width: 45px; } .c-s { width: 37px; }
.grid tr { height: 29px; }
.grid tr.rh { height: 14px; }
.grid tr.r1 { height: 39px; }
.grid tr.r16 { height: 14px; }
.grid tr.r17 { height: 3px; }
.grid th { padding: 0; background: #e6e6e6; font: 400 10px/11px "Liberation Sans", sans-serif; color: #333; border-right: 1px solid #b0b0b0; border-bottom: 1px solid #c6c6c6; text-align: center; vertical-align: bottom; overflow: hidden; }
.grid .rh th { border-right: 1px solid #b5b5b5; border-bottom: 1px solid #9a9a9a; vertical-align: middle; line-height: 12px; padding-left: 1px; }
.grid .rh th:last-child { border-right: 1px solid #e6e6e6; }
.grid .corner { position: relative; }
.corner::after { content: ""; position: absolute; right: 2px; bottom: 2px; border-left: 8px solid transparent; border-bottom: 8px solid #b8b8b8; }
.grid .rh th.sel { background: #d2d2d2; color: #217346; border-bottom: 2px solid #217346; }
.grid th.sel-row { background: #d2d2d2; color: #217346; border-right: 2px solid #217346; }
.grid .r17 th { border-bottom: 0; font-size: 0; line-height: 0; }
.grid td { padding: 0; border-right: 1px solid #d4d4d4; border-bottom: 1px solid #d4d4d4; position: relative; }
.grid td:last-child { border-right: 1px solid #9a9a9a; }
.grid .r17 td { border-bottom: 0; }
.grid .hd { background: #4472c4; color: #fff; font: 700 13.5px "Lato", sans-serif; text-align: center; vertical-align: middle; border-right: 2px solid #000; border-bottom: 2px solid #000; overflow: hidden; white-space: nowrap; }
.grid .hd:nth-child(8) { border-right: 0; }
.grid .hd:nth-child(8) .fb { right: 1px; }
.hd span { display: block; }
.hd.low span { padding-top: 6px; }
.hd sup { font-size: 9px; line-height: 0; vertical-align: 7px; margin-left: 1px; }
.fb { position: absolute; right: 0; bottom: 0; }
.grid .d { font: 700 12.5px "Lato", sans-serif; color: #111; text-align: center; vertical-align: middle; border-right: 2px solid #000; border-bottom: 2px solid #000; white-space: nowrap; padding: 2px 0 0 1px; letter-spacing: .1px; }
.grid .d:nth-child(2) { font-size: 13.6px; letter-spacing: 0; padding-top: 0; }
.grid .d.blue { border-right: 1px solid #4472c4; border-bottom: 1px solid #4472c4; padding: 0; }
.grid .d.blue.last9 { border-bottom: 2px solid #000; }
.grid .grey { background: #808080; }
.note::before { content: ""; position: absolute; left: 0; top: 0; border-top: 5px solid #1e7145; border-right: 5px solid transparent; }
.cursor { position: absolute; left: -2px; top: -2px; right: -2px; bottom: -2px; border: 2px solid #217346; }
.cursor::after { content: ""; position: absolute; right: -3px; bottom: -3px; width: 5px; height: 5px; background: #217346; border: 1px solid #fff; }

/* scrollbars */
.vscroll { width: 15px; margin-left: 3px; margin-top: 3px; display: flex; flex-direction: column; background: #f0f0f0; }
.sbtn { width: 15px; height: 15px; background: #fff; border: 1px solid #a6a6a6; display: flex; align-items: center; justify-content: center; flex: none; }
.vthumb { height: 400px; background: #fff; border: 1px solid #a6a6a6; margin-bottom: auto; }
.up { border-left: 4px solid transparent; border-right: 4px solid transparent; border-bottom: 4px solid #222; }
.down { border-left: 4px solid transparent; border-right: 4px solid transparent; border-top: 4px solid #222; }
.left { border-top: 4px solid transparent; border-bottom: 4px solid transparent; border-right: 4px solid #222; }
.right { border-top: 4px solid transparent; border-bottom: 4px solid transparent; border-left: 4px solid #222; }

/* sheet bar */
.sheetbar { height: 28px; background: #e6e6e6; border-top: 1px solid #a6a6a6; display: flex; align-items: flex-start; flex: none; }
.navs { width: 100px; display: flex; gap: 24px; padding: 8px 0 0 27px; }
.nl { border-top: 4px solid transparent; border-bottom: 4px solid transparent; border-right: 4px solid #c4c4c4; }
.nr { border-top: 4px solid transparent; border-bottom: 4px solid transparent; border-left: 4px solid #c4c4c4; }
.sheettab { width: 65px; height: 25px; background: #fff; border-left: 1px solid #a6a6a6; border-right: 1px solid #a6a6a6; border-bottom: 2px solid #217346; color: #217346; font: 700 13px/26px "Lato", sans-serif; text-align: center; margin-top: -1px; }
.plus { margin: 5px 0 0 33px; }
.hdots { width: 2px; height: 10px; margin: 8px 0 0 605px; background: repeating-linear-gradient(#aaa 0 2px, transparent 2px 4px); }
.hscroll { display: flex; margin: 6px 0 0 15px; width: 509px; background: #f0f0f0; }
.hthumb { width: 452px; height: 15px; background: #fff; border: 1px solid #a6a6a6; margin-right: auto; }

/* status */
.status { height: 22px; background: #f3f3f3; border-top: 1px solid #c6c6c6; display: flex; align-items: center; flex: none; font-size: 10.5px; color: #444; }
.ready { margin-left: 11px; width: 50px; }
.acctxt { margin-left: 3px; width: 986px; white-space: nowrap; letter-spacing: .4px; }
.views { display: flex; margin-left: 0; align-self: stretch; }
.view { width: 40px; display: flex; align-items: center; justify-content: center; }
.view.on { background: #c6c6c6; }
.zm { width: 14px; font-size: 14px; text-align: center; color: #444; line-height: 14px; }
.zm-minus { margin-left: 3px; }
.zm-plus { margin-left: 1px; }
.slider { width: 100px; height: 1px; background: #444; margin-left: 2px; position: relative; }
.thumb { position: absolute; left: 32px; top: -5px; width: 5px; height: 11px; background: #555; }
.tick { position: absolute; left: 50px; top: -2px; width: 1px; height: 5px; background: #444; }
.pctz { margin-left: 11px; font-size: 10.5px; }

/* taskbar */
.taskbar { height: 40px; background: #1b1b1b; display: flex; flex: none; color: #fff; }
.slot { width: 48px; height: 40px; display: flex; align-items: center; justify-content: center; flex: none; position: relative; }
.apps { display: flex; margin-left: 4px; }
.slot.u::after { content: ""; position: absolute; left: 4px; right: 4px; bottom: 0; height: 2px; background: #76b9ed; }
.slot.active { background: #3c3c3c; }
.slot.active::after { content: ""; position: absolute; left: 0; right: 0; bottom: 0; height: 2px; background: #76b9ed; }
.appl { font: 700 12px "Liberation Sans", sans-serif; fill: #fff; }
.appl.small { font-size: 11px; }
.mr { font: 700 11px "Liberation Sans", sans-serif; fill: #fff; }
.mr.m { fill: #5aa6dc; }
.tray { display: flex; align-items: center; margin-left: 3px; }
.ti { width: 24px; display: flex; justify-content: center; align-items: center; }
.lang { font: 12px "Noto Sans", "DejaVu Sans", sans-serif; }
.clock { width: 76px; margin-left: 3px; display: flex; flex-direction: column; align-items: center; font-size: 11.2px; line-height: 18px; color: #eee; }
.notif { width: 32px; position: relative; display: flex; justify-content: center; }
.nbadge { position: absolute; left: 15px; top: 5px; width: 16px; height: 16px; border-radius: 50%; background: #444; border: 1px solid #999; color: #fff; font: 700 10px/14px "Open Sans", sans-serif; text-align: center; }
.desk { width: 1px; height: 40px; background: #666; margin-left: 13px; }

.watermark { position: absolute; left: 598px; top: 708px; width: 170px; font: 700 42px/60px "DejaVu Sans", sans-serif; color: rgba(140,140,140,.32); text-align: center; white-space: nowrap; pointer-events: none; }
```
